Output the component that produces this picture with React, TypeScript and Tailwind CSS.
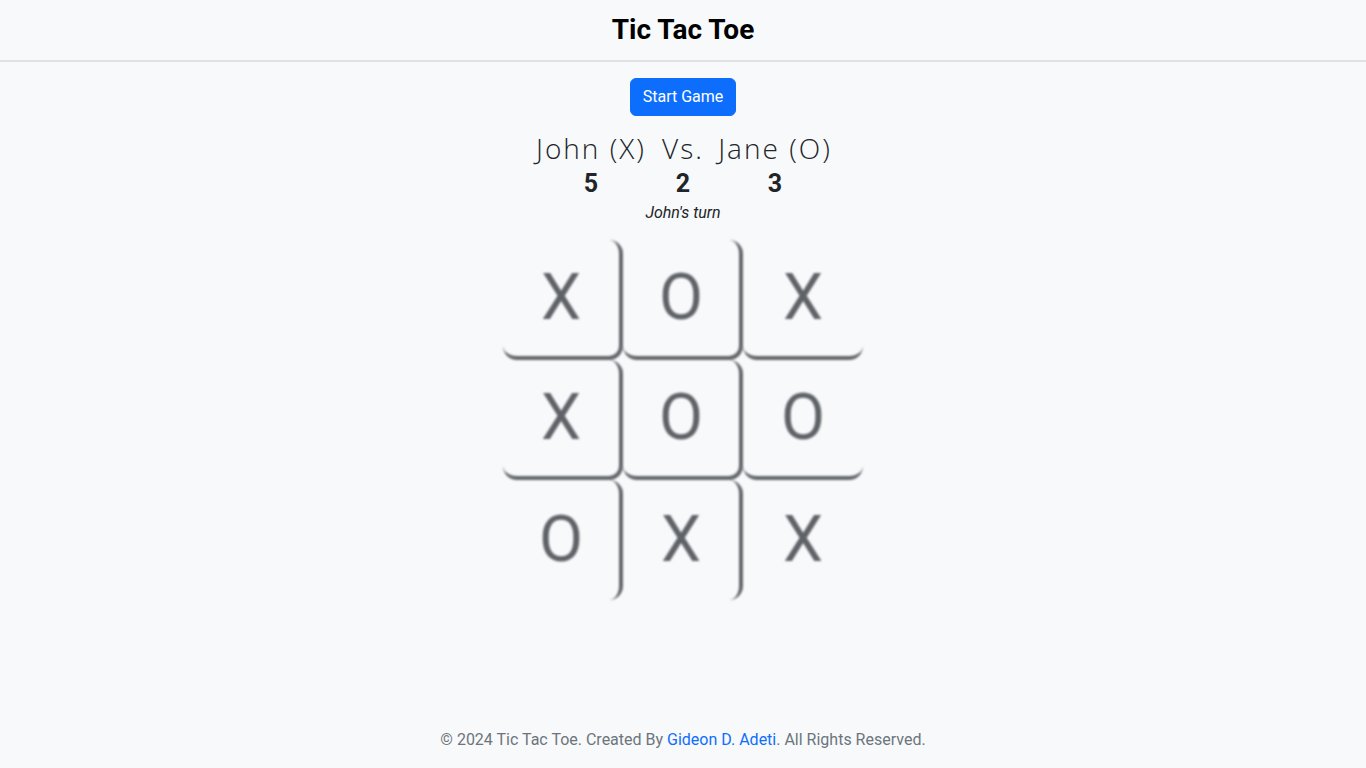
import React from "react";

const board = [
  ["X", "O", "X"],
  ["X", "O", "O"],
  ["O", "X", "X"],
];

const cellClasses = [
  [
    "border-r-[4px] border-b-[4px]",
    "border-r-[4px] border-b-[4px]",
    "border-b-[4px]",
  ],
  [
    "border-r-[4px] border-b-[4px]",
    "border-r-[4px] border-b-[4px]",
    "border-b-[4px]",
  ],
  ["border-r-[4px]", "border-r-[4px]", ""],
];

const nameFont = { fontFamily: "'Open Sans', Lato, sans-serif" };

export default function App() {
  return (
    <div
      className="min-h-screen flex flex-col bg-[#f8f9fa] text-[#212529]"
      style={{ fontFamily: "Roboto, 'Liberation Sans', sans-serif" }}
    >
      <header className="h-[62px] flex items-center justify-center border-b-2 border-[#dee2e6]">
        <h1 className="text-[28px] font-bold text-black leading-none">Tic Tac Toe</h1>
      </header>

      <main className="flex flex-col items-center flex-1">
        <button className="mt-4 h-[38px] px-3 rounded-md bg-[#0d6efd] text-white text-base leading-6 border border-[#0d6efd]">
          Start Game
        </button>

        <div className="mt-[12px] grid grid-cols-[92px_92px_92px] justify-center">
          <div className="text-center whitespace-nowrap text-[28px] tracking-[2px] font-light leading-[40px] -mx-8" style={nameFont}>
            John (X)
          </div>
          <div className="text-center whitespace-nowrap text-[28px] tracking-[2px] font-light leading-[40px]" style={nameFont}>
            Vs.
          </div>
          <div className="text-center whitespace-nowrap text-[28px] tracking-[2px] font-light leading-[40px] -mx-8" style={nameFont}>
            Jane (O)
          </div>
          <div className="text-center text-[25px] font-bold leading-[32px]">5</div>
          <div className="text-center text-[25px] font-bold leading-[32px]">2</div>
          <div className="text-center text-[25px] font-bold leading-[32px]">3</div>
        </div>

        <p className="italic text-base leading-6 mt-[1px]">John's turn</p>

        <div className="mt-[15px] grid grid-cols-[120px_120px_120px] blur-[1px]">
          {board.map((row, r) =>
            row.map((v, c) => (
              <div
                key={`${r}-${c}`}
                className={`h-[120px] w-[120px] flex items-center justify-center rounded-[14px] border-[#62666b] text-[64px] leading-none text-[#5f6368] ${cellClasses[r][c]}`}
              >
                {v}
              </div>
            ))
          )}
        </div>
      </main>

      <footer className="pb-4 text-center text-base leading-6 text-[#6c757d]">
        © 2024 Tic Tac Toe. Created By{" "}
        <a className="text-[#0d6efd]">Gideon D. Adeti</a>. All Rights Reserved.
      </footer>
    </div>
  );
}
